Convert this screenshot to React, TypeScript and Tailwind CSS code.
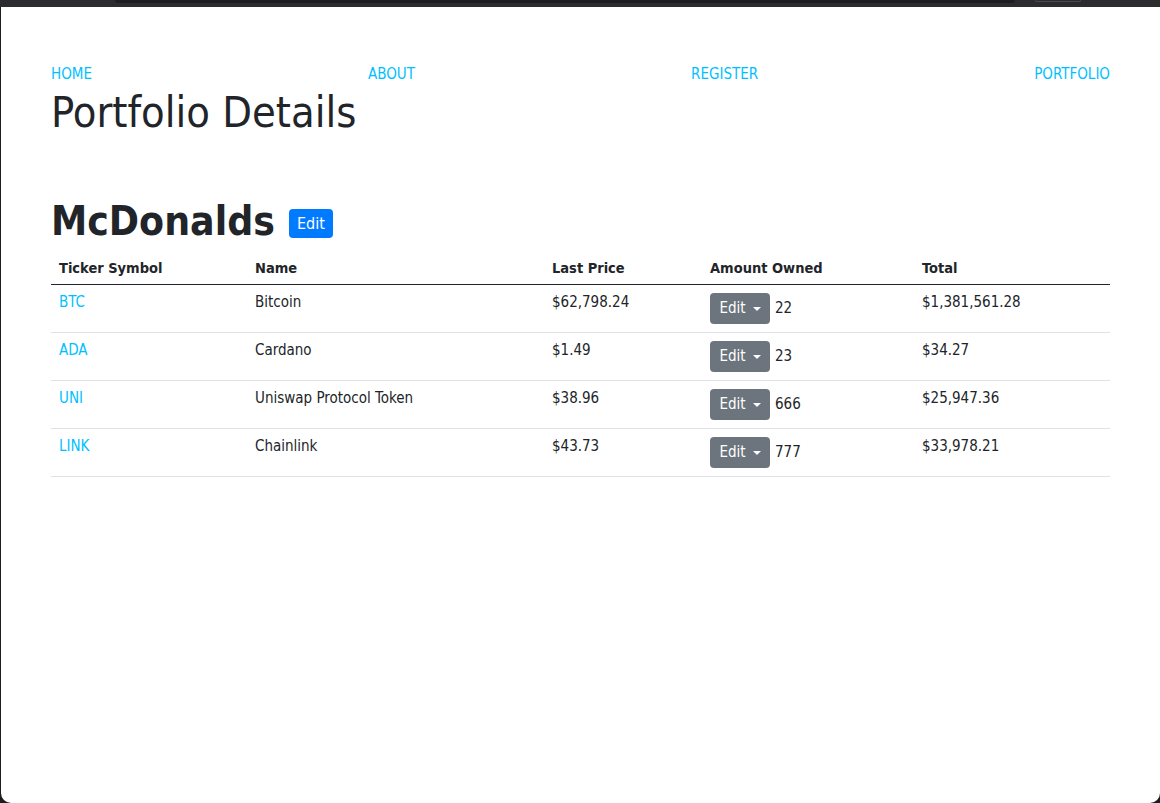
import React from 'react';

const rows = [
  { ticker: "BTC", name: "Bitcoin", price: "$62,798.24", amount: "22", total: "$1,381,561.28" },
  { ticker: "ADA", name: "Cardano", price: "$1.49", amount: "23", total: "$34.27" },
  { ticker: "UNI", name: "Uniswap Protocol Token", price: "$38.96", amount: "666", total: "$25,947.36" },
  { ticker: "LINK", name: "Chainlink", price: "$43.73", amount: "777", total: "$33,978.21" },
];

const navLinks = ["HOME", "ABOUT", "REGISTER", "PORTFOLIO"];

const App: React.FC = () => {
  return (
    <div className="h-[803px] w-[1160px] bg-[#1d1d1f] flex flex-col overflow-hidden">
      {/* Browser chrome strip */}
      <div className="h-[7px] bg-[#2c2c2e] flex items-start shrink-0">
        <div className="ml-[115px] w-[900px] h-[3px] bg-[#1e1e20] rounded-b-[6px]"></div>
        <div className="ml-[20px] w-[46px] h-[2px] border-b border-x border-[#4a4a4c] rounded-b-[4px]"></div>
      </div>

      <div
        className="flex-1 ml-px bg-white rounded-b-[10px] px-[50px] pt-[56px] text-[#212529]"
        style={{ fontFamily: '"DejaVu Sans Condensed", "DejaVu Sans", sans-serif' }}
      >
        {/* Nav */}
        <nav className="flex justify-between text-[15px] leading-[22px]">
          {navLinks.map((link) => (
            <a key={link} href="#" className="text-[#00bfff]">
              {link}
            </a>
          ))}
        </nav>

        <h1 className="mt-[1px] text-[43px] leading-[52px] font-normal">Portfolio Details</h1>

        <div className="mt-[59px] flex items-center gap-[14px] h-[48px]">
          <h2 className="text-[40.5px] leading-[48px] font-bold">McDonalds</h2>
          <button className="mt-[5px] h-[29px] w-[44px] bg-[#007bff] text-white text-[16px] rounded-[4px]">
            Edit
          </button>
        </div>

        <table className="w-full mt-[7px] text-[15px] leading-[21px] border-collapse">
          <thead>
            <tr className="border-b border-[#212529] text-left text-[14.5px]">
              <th className="w-[196px] pl-[8px] pt-[6px] pb-[5px] font-bold">Ticker Symbol</th>
              <th className="w-[297px] pl-[8px] pt-[6px] pb-[5px] font-bold">Name</th>
              <th className="w-[158px] pl-[8px] pt-[6px] pb-[5px] font-bold">Last Price</th>
              <th className="w-[212px] pl-[8px] pt-[6px] pb-[5px] font-bold">Amount Owned</th>
              <th className="pl-[8px] pt-[6px] pb-[5px] font-bold">Total</th>
            </tr>
          </thead>
          <tbody>
            {rows.map((r) => (
              <tr key={r.ticker} className="border-b border-[#dee2e6] h-[48px]">
                <td className="pl-[8px] pt-[7px] align-top">
                  <a href="#" className="text-[#00bfff]">{r.ticker}</a>
                </td>
                <td className="pl-[8px] pt-[7px] align-top">{r.name}</td>
                <td className="pl-[8px] pt-[7px] align-top">{r.price}</td>
                <td className="pl-[8px] pt-[8px] align-top">
                  <div className="flex items-center gap-[5px]">
                    <button className="h-[31px] w-[60px] flex items-center justify-center gap-[7px] bg-[#6c757d] text-white text-[15px] rounded-[4px]">
                      Edit
                      <span className="w-0 h-0 border-x-[4px] border-x-transparent border-t-[4px] border-t-white"></span>
                    </button>
                    <span>{r.amount}</span>
                  </div>
                </td>
                <td className="pl-[8px] pt-[7px] align-top">{r.total}</td>
              </tr>
            ))}
          </tbody>
        </table>
      </div>
    </div>
  );
};

export default App;
